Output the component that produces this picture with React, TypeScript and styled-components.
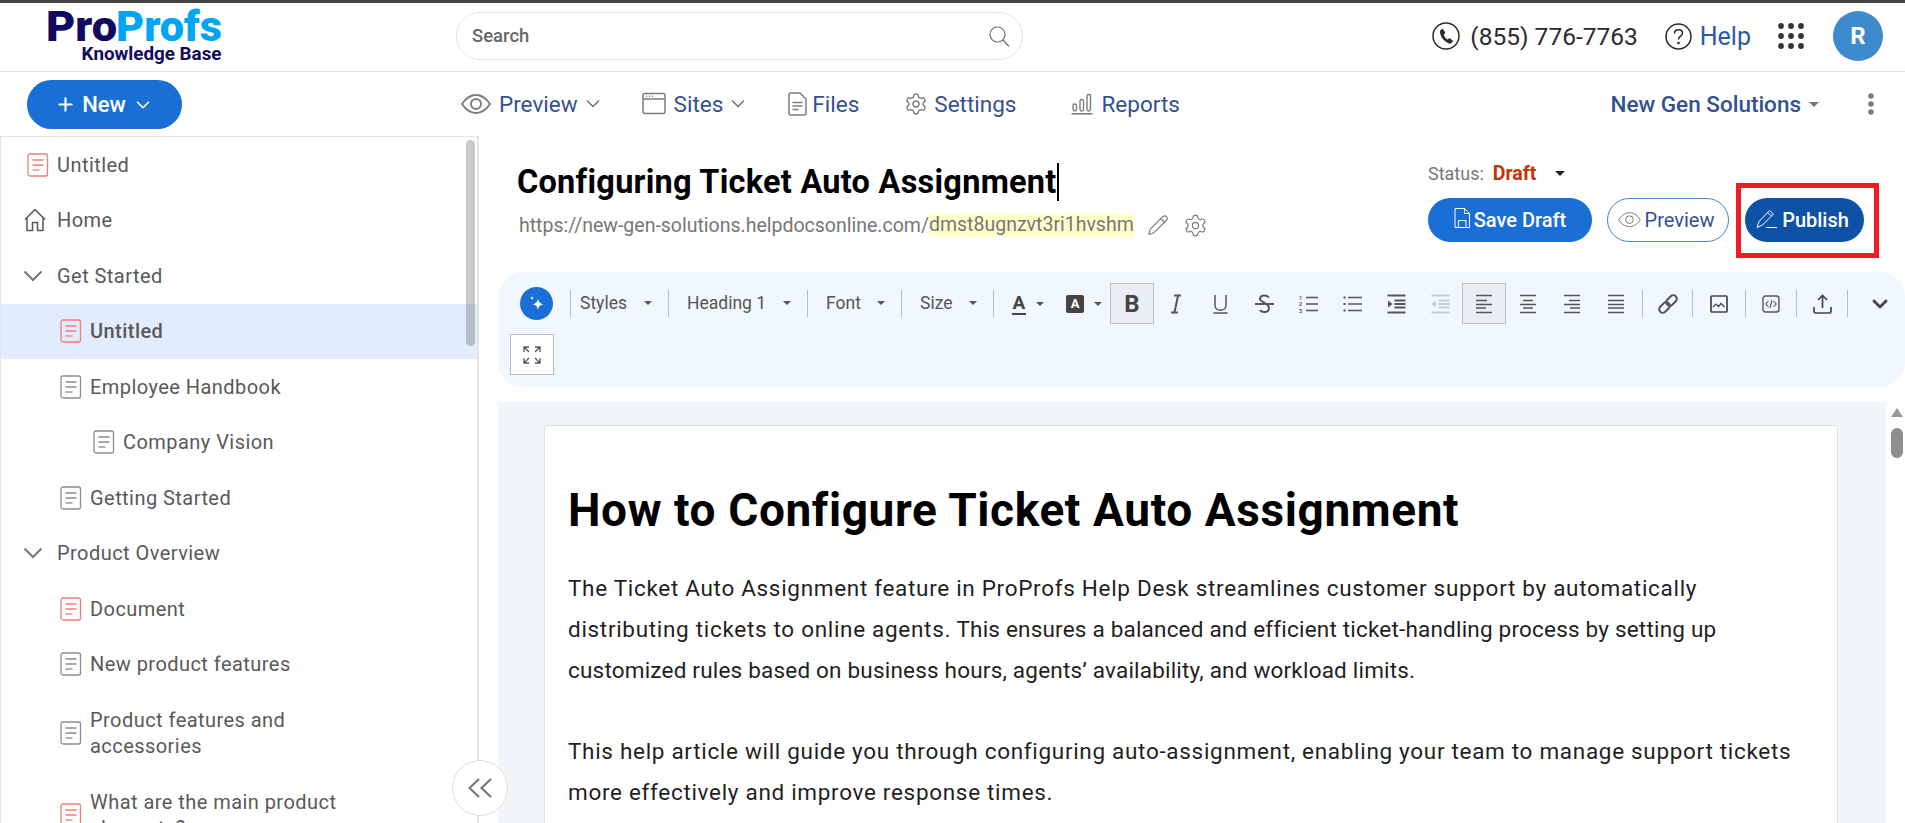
import React from "react";
import styled, { createGlobalStyle } from "styled-components";
import { Settings, ChevronDown, Pencil, Plus } from "lucide-react";

const Global = createGlobalStyle`
  html, body { margin: 0; padding: 0; height: 100%; overflow: hidden; background: #fff; }
  body { font-family: Roboto, "Liberation Sans", sans-serif; }
  * { box-sizing: border-box; }
  svg { display: block; flex: none; }
`;

const Page = styled.div`
  width: 1905px; height: 823px; display: flex; flex-direction: column; overflow: hidden; border-top: 3px solid #444;
`;

/* ---------- top header ---------- */
const Header = styled.header`
  height: 69px; flex: none; display: flex; align-items: center; border-bottom: 1px solid #e4e4e4; padding: 0 22px 2px 0;
`;
const LogoBox = styled.div`
  width: 456px; padding-left: 47px; height: 100%;
`;
const Logo = styled.svg`
  margin-top: 2px;
`;
const Search = styled.div`
  width: 567px; height: 48px; border: 1px solid #e6e6e6; border-radius: 24px; display: flex; align-items: center; justify-content: space-between;
  padding: 0 12px 0 15px;
`;
const SearchLabel = styled.span`
  font-size: 18.5px; font-weight: 500; color: #666;
`;
const HeaderRight = styled.div`
  margin-left: auto; display: flex; align-items: center;
`;
const PhoneText = styled.span`
  font-size: 24.5px; color: #2b2b2b; margin-left: 10px; margin-right: 27px; white-space: nowrap;
`;
const HelpText = styled.span`
  font-size: 25px; color: #2d5aa3; margin-left: 8px; margin-right: 27px;
`;
const Avatar = styled.div`
  width: 50px; height: 50px; border-radius: 50%; background: #3d8bcc; color: #fff; font-size: 24px; font-weight: 700;
  display: flex; align-items: center; justify-content: center; margin-left: 29px;
`;

/* ---------- nav bar ---------- */
const NavBar = styled.nav`
  height: 64px; flex: none; display: flex; align-items: center; padding-left: 27px; padding-right: 31px;
`;
const NewButton = styled.div`
  width: 155px; height: 49px; border-radius: 25px; background: #1a6fd6; color: #fff; font-size: 22px; font-weight: 500;
  display: flex; align-items: center; justify-content: center; gap: 6px; margin-top: 1px; margin-right: 279px;
`;
const NavItem = styled.div<{ $gap?: number; $inner?: number }>`
  display: flex; align-items: center; font-size: 22.5px; color: #33528f; margin-right: ${(p) => p.$gap ?? 43}px; white-space: nowrap;
  gap: ${(p) => p.$inner ?? 8}px; padding-bottom: 1px;
`;
const OrgName = styled.div`
  margin-left: auto; display: flex; align-items: center; gap: 8px; font-size: 22.5px; font-weight: 500; color: #33528f;
`;
const Kebab = styled.div`
  margin-left: 41px;
`;

/* ---------- body layout ---------- */
const Body = styled.div`
  flex: 1; min-height: 0; display: flex; position: relative;
`;
const Sidebar = styled.aside`
  width: 479px; flex: none; border: 1px solid #e4e4e4; border-width: 1px 2px 0 1px; position: relative; overflow: hidden;
`;
const Row = styled.div<{ $active?: boolean; $indent?: number }>`
  display: flex; align-items: center; padding: 14.5px 60px 14.5px ${(p) => p.$indent ?? 26}px;
  background: ${(p) => (p.$active ? "#e1edfd" : "transparent")};
  font-size: 20px; line-height: 26.5px; letter-spacing: 0.45px; color: #595959; font-weight: ${(p) => (p.$active ? 500 : 400)};
`;
const RowIcon = styled.span`
  width: 30px; flex: none; display: flex; align-items: center;
`;
const RowLabel = styled.span`
  max-width: 285px;
`;
const Thumb = styled.div`
  position: absolute; top: 3px; right: 2px; width: 9px; height: 206px; border-radius: 5px; background: rgba(60, 60, 60, 0.27);
`;
const Collapse = styled.div`
  position: absolute; left: 452px; top: 624px; width: 56px; height: 56px; border-radius: 50%; border: 1.5px solid #ddd; background: #fff;
  display: flex; align-items: center; justify-content: center; z-index: 2;
`;

const Content = styled.main`
  flex: 1; min-width: 0; display: flex; flex-direction: column;
`;
const TitleBar = styled.div`
  height: 136px; flex: none; display: flex; justify-content: space-between; padding: 26px 41px 0 38px;
`;
const TitleCol = styled.div`
  display: flex; flex-direction: column;
`;
const Title = styled.div`
  display: flex; align-items: center; font-size: 32.5px; font-weight: 700; letter-spacing: 0.25px; color: #000; height: 40px; white-space: nowrap;
  &::after { content: ""; width: 2px; height: 38px; background: #000; }
`;
const UrlRow = styled.div`
  display: flex; align-items: center; margin-top: 11px; padding-left: 2px; height: 24px;
`;
const Url = styled.span`
  font-size: 19.5px; color: #777;
`;
const Slug = styled.span`
  font-size: 19.5px; color: #777; background: #ffffcc; line-height: 24px;
`;
const UrlIcons = styled.span`
  display: flex; align-items: center; gap: 14px; margin-left: 13px; color: #777;
`;
const ActionCol = styled.div`
  display: flex; flex-direction: column;
`;
const StatusRow = styled.div`
  display: flex; align-items: center; height: 24px; margin-top: -1px; font-size: 18px; color: #777;
`;
const DraftLabel = styled.b`
  color: #c63300; font-size: 19.5px; font-weight: 700; margin-left: 9px; margin-right: 19px;
`;
const ButtonRow = styled.div`
  display: flex; align-items: center; margin-top: 13px;
`;
const Pill = styled.div<{ $bg: string; $w: number; $gap?: number; $border?: string; $color?: string; $pr?: number }>`
  width: ${(p) => p.$w}px; height: 44px; border-radius: 22px; background: ${(p) => p.$bg}; color: ${(p) => p.$color ?? "#fff"};
  border: ${(p) => (p.$border ? `1px solid ${p.$border}` : "none")}; font-size: 20px; font-weight: ${(p) => (p.$border ? 400 : 500)}; position: relative;
  display: flex; align-items: center; justify-content: center; gap: 4px; margin-right: ${(p) => p.$gap ?? 0}px; padding-right: ${(p) => p.$pr ?? 0}px;
`;
const RedBox = styled.div`
  position: absolute; left: -9px; right: -15px; top: -15px; bottom: -16px; border: 5px solid #ee1c25;
`;

/* ---------- toolbar ---------- */
const Toolbar = styled.div`
  margin-left: 19px; flex: none; height: 115px; background: #f0f7ff; border-radius: 25px; padding: 11px 0 0 12px;
  display: flex; flex-direction: column; gap: 10px;
`;
const ToolRow = styled.div`
  display: flex; align-items: center; height: 41px;
`;
const AiBall = styled.div`
  width: 33px; height: 33px; flex: none; border-radius: 50%; background: #1a6fd6; margin: 0 17px 0 10px; display: flex; align-items: center; justify-content: center;
`;
const Sep = styled.div<{ $gap?: number }>`
  width: 1px; height: 27px; background: #bcbcbc; flex: none; margin-left: ${(p) => p.$gap ?? 0}px;
`;
const Drop = styled.div<{ $w: number; $pad?: number }>`
  width: ${(p) => p.$w}px; flex: none; display: flex; align-items: center; justify-content: space-between; padding: 0 16px 2px ${(p) => p.$pad ?? 18}px;
  font-size: 17.5px; color: #555; white-space: nowrap;
`;
const Caret = styled.span<{ $c?: string; $s?: number }>`
  width: 0; height: 0; flex: none; border-left: ${(p) => p.$s ?? 4}px solid transparent; border-right: ${(p) => p.$s ?? 4}px solid transparent;
  border-top: ${(p) => p.$s ?? 4}px solid ${(p) => p.$c ?? "#555"};
`;
const ToolBtn = styled.div<{ $w?: number; $on?: boolean }>`
  width: ${(p) => p.$w ?? 44}px; height: 41px; flex: none; display: flex; align-items: center; justify-content: center;
  background: ${(p) => (p.$on ? "#e9eef5" : "transparent")}; border: 1px solid ${(p) => (p.$on ? "#bdbdbd" : "transparent")};
  color: #444;
`;
const ColorCell = styled.div<{ $w: number; $pad: number }>`
  width: ${(p) => p.$w}px; flex: none; display: flex; align-items: center; padding-left: ${(p) => p.$pad}px; gap: 10px;
`;
const GlyphA = styled.span`
  font-size: 19px; font-weight: 700; color: #444; line-height: 20px; border-bottom: 2px solid #444; width: 14px; text-align: center; display: block;
`;
const GlyphBoxA = styled.span`
  width: 18px; height: 18px; border-radius: 2px; background: #444; color: #fff; font-size: 13px; font-weight: 700; display: flex; align-items: center; justify-content: center;
`;
const GlyphB = styled.span`
  font-size: 24px; font-weight: 700; color: #444;
`;
const ExpandBtn = styled.div`
  width: 44px; height: 41px; background: #fff; border: 1px solid #bdbdbd; display: flex; align-items: center; justify-content: center;
`;

/* ---------- editor ---------- */
const Editor = styled.div`
  margin-left: 19px; margin-top: 15px; flex: 1; min-height: 0; display: flex;
`;
const Canvas = styled.div`
  flex: 1; background: #f3f6f9; padding: 23px 48px 0 46px; overflow: hidden;
`;
const Sheet = styled.article`
  background: #fff; border: 1px solid #e0e0e0; border-bottom: none; border-radius: 3px 3px 0 0; padding: 0 23px; height: 600px;
`;
const H1 = styled.h1`
  margin: 54px 0 0; font-size: 46px; line-height: 60px; letter-spacing: 0.6px; font-weight: 700; color: #000;
`;
const Para = styled.p`
  margin: 0 0 40px; max-width: 1224px; font-size: 22.5px; line-height: 41px; letter-spacing: 0.2px; color: #1f1f1f;
`;
const Lead = styled(Para)`
  margin-top: 28px;
`;
const Wide = styled.span`
  letter-spacing: 0.69px;
`;
const ScrollCol = styled.div`
  width: 19px; flex: none; background: #fff; display: flex; flex-direction: column; align-items: center; padding-top: 6px; padding-left: 3px;
`;
const ScrollUp = styled.span`
  width: 0; height: 0; border-left: 6px solid transparent; border-right: 6px solid transparent; border-bottom: 9px solid #999;
`;
const ScrollThumb = styled.div`
  width: 12px; height: 30px; border-radius: 6px; background: #8e8e8e; margin-top: 11px;
`;

/* ---------- drawings ---------- */
const Doc = ({ red }: { red?: boolean }) => {
  const c = red ? "#f27c7c" : "#8c8c8c";
  return (
    <svg width="22" height="24" viewBox="0 0 22 24" fill="none" stroke={c} strokeWidth="1.3">
      <rect x="1" y="1" width="19.5" height="22" rx="2" />
      <path d="M5.5 7h11M5.5 12h11" />
      <path d="M5.5 17h7" />
    </svg>
  );
};
const Home = () => (
  <svg width="22" height="24" viewBox="0 0 22 24" fill="none" stroke="#555" strokeWidth="1.5" strokeLinejoin="round" style={{ marginLeft: -3 }}>
    <path d="M1 11.5 11 1.5l10 10" />
    <path d="M3 9.5V22.5h5.5V14.5h5V22.5H19V9.5" />
  </svg>
);
const Chev = () => (
  <svg width="20" height="12" viewBox="0 0 20 12" fill="none" stroke="#777" strokeWidth="2" style={{ marginLeft: -4 }}>
    <path d="M1.5 1.5 10 10l8.5-8.5" />
  </svg>
);
const Eye = ({ c = "#7d7d7d", w = 30, sw = 2 }: { c?: string; w?: number; sw?: number }) => (
  <svg width={w} height={(w * 20) / 30} viewBox="0 0 30 20" fill="none" stroke={c} strokeWidth={sw}>
    <path d="M1 10C6 2.5 10.500 1 15 1s9 1.500 14 9c-5 7.500-9.500 9-14 9s-9-1.500-14-9Z" />
    <circle cx="15" cy="10" r="5" />
  </svg>
);
const SmallChev = () => (
  <svg width="14" height="9" viewBox="0 0 14 9" fill="none" stroke="#6d6d6d" strokeWidth="1.400">
    <path d="M1 1.500 7 7.500l6-6" />
  </svg>
);
const SitesIcon = () => (
  <svg width="24" height="23" viewBox="0 0 24 23" fill="none" stroke="#7d7d7d" strokeWidth="1.500">
    <rect x="1" y="1.500" width="22" height="20" rx="2" />
    <path d="M1 7h22M4 4.300h1M7 4.300h1M10 4.300h1" />
  </svg>
);
const FilesIcon = () => (
  <svg width="19" height="24" viewBox="0 0 19 24" fill="none" stroke="#7d7d7d" strokeWidth="1.500" strokeLinejoin="round">
    <path d="M2.500 1h9.500l6 6v14.500a1.500 1.500 0 0 1-1.500 1.500h-14A1.500 1.500 0 0 1 1 21.500v-19A1.500 1.500 0 0 1 2.500 1Z" />
    <path d="M4.500 10.500h10M4.500 14h10M4.500 17.500h6" />
  </svg>
);
const ReportsIcon = () => (
  <svg width="22" height="22" viewBox="0 0 22 22" fill="none" stroke="#7d7d7d" strokeWidth="1.400">
    <rect x="2" y="11" width="3.500" height="7" rx="1.700" />
    <rect x="9" y="6.500" width="3.500" height="11.500" rx="1.700" />
    <rect x="16" y="1.500" width="3.500" height="16.500" rx="1.700" />
    <path d="M0.500 20.800h21" strokeWidth="1.600" />
  </svg>
);
const SearchIcon = () => (
  <svg width="21" height="21" viewBox="0 0 21 21" fill="none" stroke="#6e6e6e" strokeWidth="1.200">
    <circle cx="8.500" cy="8.500" r="7.500" />
    <path d="M14 14l6 6.500" />
  </svg>
);
const PhoneCircle = () => (
  <svg width="28" height="28" viewBox="0 0 28 28">
    <circle cx="14" cy="14" r="13" fill="none" stroke="#2b2b2b" strokeWidth="1.500" />
    <path fill="#2b2b2b" d="M10.600 6.500 8 8.700c-.6 5.500 5 12.500 10.700 13l2.500-2.600-3.700-3-1.800 1.400c-1.900-.8-3.500-3-4-5l1.800-1.500Z" />
  </svg>
);
const HelpCircle = () => (
  <svg width="27" height="27" viewBox="0 0 27 27" fill="none" stroke="#2b2b2b" strokeWidth="1.500">
    <circle cx="13.500" cy="13.500" r="12.500" />
    <path d="M9.500 10.500c0-2.400 1.800-3.700 4-3.700s4 1.400 4 3.400c0 3-4 3-4 6.200" />
    <circle cx="13.500" cy="20" r=".6" fill="#2b2b2b" />
  </svg>
);
const Grid9 = () => (
  <svg width="26" height="26" viewBox="0 0 26 26" fill="#333">
    {[3, 13, 23].map((y) => [3, 13, 23].map((x) => <circle key={`${x}-${y}`} cx={x} cy={y} r="2.900" />))}
  </svg>
);
const KebabIcon = () => (
  <svg width="6" height="22" viewBox="0 0 6 22" fill="#7d7d7d">
    <circle cx="3" cy="3" r="2.800" />
    <circle cx="3" cy="11" r="2.800" />
    <circle cx="3" cy="19" r="2.800" />
  </svg>
);
const SaveIcon = () => (
  <svg width="16" height="20" viewBox="0 0 16 20" fill="none" stroke="#fff" strokeWidth="1" style={{ marginTop: -5 }}>
    <path d="M1 .500h9.500l5 5v14H1Z" />
    <path d="M10.500 .500v5h5M4.500 19.500v-7h7.500v7" />
  </svg>
);
const PublishIcon = () => (
  <svg width="22" height="20" viewBox="0 0 22 20" fill="none" stroke="#fff" strokeWidth="1" style={{ marginTop: -3 }}>
    <path d="M1 18.500 3 12.500 13.500 1.500l4 3.500L6.500 16Z" />
    <path d="M11.500 3.500l4 3.500M10 18.500h11" />
  </svg>
);
const Spark = () => (
  <svg width="18" height="18" viewBox="0 0 18 18" fill="#fff">
    <path d="M10 3.500c.6 3.500 2 5 5.500 5.700-3.500.7-4.900 2.200-5.500 5.800-.6-3.600-2-5.100-5.500-5.800 3.500-.7 4.900-2.200 5.500-5.700Z" />
    <path d="M4 1c.2 1.300.8 1.900 2 2.100-1.200.3-1.800.9-2 2.100-.2-1.200-.8-1.800-2-2.100 1.200-.2 1.800-.8 2-2.100Z" />
  </svg>
);
const Draw = ({ w = 20, h = 20, sw = 1.800, c = "#555", d }: { w?: number; h?: number; sw?: number; c?: string; d: string }) => (
  <svg width={w} height={h} viewBox={`0 0 ${w} ${h}`} fill="none" stroke={c} strokeWidth={sw}>
    <path d={d} />
  </svg>
);
const OlIcon = () => (
  <svg width="19" height="18" viewBox="0 0 19 18" fill="none" stroke="#555" strokeWidth="1.300">
    <path d="M7 2.500h12M7 9h12M7 15.500h12" />
    <text x="0" y="5" fontSize="5.500" fill="#555" stroke="none" fontWeight="700" fontFamily="Roboto">1</text>
    <text x="0" y="11" fontSize="5.500" fill="#555" stroke="none" fontWeight="700" fontFamily="Roboto">2</text>
    <text x="0" y="17.500" fontSize="5.500" fill="#555" stroke="none" fontWeight="700" fontFamily="Roboto">3</text>
  </svg>
);
const UlIcon = () => (
  <svg width="19" height="18" viewBox="0 0 19 18" fill="none" stroke="#555" strokeWidth="1.300">
    <path d="M5 2.500h14M5 9h14M5 15.500h14" />
    <path d="M0.500 2.500h2M0.500 9h2M0.500 15.500h2" strokeWidth="2" />
  </svg>
);
const Indent = ({ out }: { out?: boolean }) => {
  const c = out ? "#c6cbd2" : "#555";
  return (
    <svg width="19" height="20" viewBox="0 0 19 20" fill="none" stroke={c} strokeWidth="1.800">
      <path d="M0.500 1.500h18M7.500 6.500h11M7.500 10h11M7.500 13.500h11M0.500 18.500h18" />
      <path d={out ? "M5 6.500v7L0.500 10Z" : "M1 6.500v7L5.500 10Z"} fill={c} stroke="none" />
    </svg>
  );
};
const Align = ({ d }: { d: string }) => <Draw w={18} h={20} sw={1.600} d={d} />;
const LinkIcon = () => (
  <svg width="20" height="24" viewBox="0 0 20 24" fill="none" stroke="#555" strokeWidth="2">
    <g transform="rotate(45 10 12)">
      <rect x="6.500" y="1" width="7" height="12" rx="3.500" />
      <rect x="6.500" y="11" width="7" height="12" rx="3.500" />
    </g>
  </svg>
);
const ImageIcon = () => (
  <svg width="18" height="18" viewBox="0 0 18 18" fill="none" stroke="#444" strokeWidth="1.700">
    <rect x="1" y="1" width="16" height="16" rx="1" />
    <path d="M3 12l3-3 2.500 2.500 2.500-3 3.500 3.500" strokeWidth="1.200" />
  </svg>
);
const CodeIcon = () => (
  <svg width="18" height="18" viewBox="0 0 18 18" fill="none" stroke="#555" strokeWidth="1.100">
    <rect x="1" y="1" width="16" height="16" rx="2.500" strokeWidth="1.400" />
    <path d="M6.500 6 3.800 9l2.700 3M11.500 6l2.700 3-2.700 3M10 5 8 13" />
  </svg>
);
const UploadIcon = () => (
  <svg width="19" height="20" viewBox="0 0 19 20" fill="none" stroke="#444" strokeWidth="1.700">
    <path d="M9.500 14V2M5 6l4.500-4.500L14 6" />
    <path d="M1 13v4.500a1.500 1.500 0 0 0 1.500 1.500h14a1.500 1.500 0 0 0 1.500-1.500V13" />
  </svg>
);
const ExpandIcon = () => (
  <svg width="18" height="18" viewBox="0 0 18 18" fill="none" stroke="#555" strokeWidth="1.300">
    <path d="M1 6V1h5M1 1l5 5M12 1h5v5M17 1l-5 5M1 12v5h5M1 17l5-5M17 12v5h-5M17 17l-5-5" />
  </svg>
);
const DoubleLeft = () => (
  <svg width="24" height="20" viewBox="0 0 24 20" fill="none" stroke="#777" strokeWidth="2.200">
    <path d="M11 1 1.500 10l9.500 9M23 1l-9.500 9 9.500 9" />
  </svg>
);

type Item = { label: string; icon?: "red" | "grey" | "home" | "chev"; indent?: number; active?: boolean };
const tree: Item[] = [
  { label: "Untitled", icon: "red" },
  { label: "Home", icon: "home" },
  { label: "Get Started", icon: "chev" },
  { label: "Untitled", icon: "red", indent: 59, active: true },
  { label: "Employee Handbook", icon: "grey", indent: 59 },
  { label: "Company Vision", icon: "grey", indent: 92 },
  { label: "Getting Started", icon: "grey", indent: 59 },
  { label: "Product Overview", icon: "chev" },
  { label: "Document", icon: "red", indent: 59 },
  { label: "New product features", icon: "grey", indent: 59 },
  { label: "Product features and accessories", icon: "grey", indent: 59 },
  { label: "What are the main product elements?", icon: "red", indent: 59 },
];

const renderIcon = (k: Item["icon"]) => {
  if (k === "red") return <Doc red />;
  if (k === "grey") return <Doc />;
  if (k === "home") return <Home />;
  return <Chev />;
};

export default function App() {
  return (
    <Page>
      <Global />
      <Header>
        <LogoBox>
          <Logo width="180" height="60" viewBox="0 0 180 60" fontFamily="Roboto, sans-serif">
            <text x="-1" y="35.700" fontSize="43" fontWeight="900" fill="#110a5f" textLength="71" lengthAdjust="spacingAndGlyphs">Pro</text>
            <text x="69" y="35.700" fontSize="43" fontWeight="900" fill="#00a5f6" textLength="106" lengthAdjust="spacingAndGlyphs">Profs</text>
            <text x="34.500" y="54.500" fontSize="18.500" fontWeight="700" fill="#110a5f" textLength="140" lengthAdjust="spacingAndGlyphs">Knowledge Base</text>
          </Logo>
        </LogoBox>
        <Search>
          <SearchLabel>Search</SearchLabel>
          <SearchIcon />
        </Search>
        <HeaderRight>
          <PhoneCircle />
          <PhoneText>(855) 776-7763</PhoneText>
          <HelpCircle />
          <HelpText>Help</HelpText>
          <Grid9 />
          <Avatar>R</Avatar>
        </HeaderRight>
      </Header>

      <NavBar>
        <NewButton>
          <Plus size={21} strokeWidth={2.4} />
          <span>New</span>
          <ChevronDown size={22} strokeWidth={1.8} />
        </NewButton>
        <NavItem $gap={42}>
          <Eye />
          Preview
          <SmallChev />
        </NavItem>
        <NavItem>
          <SitesIcon />
          Sites
          <SmallChev />
        </NavItem>
        <NavItem $gap={45} $inner={5}>
          <FilesIcon />
          Files
        </NavItem>
        <NavItem $gap={55} $inner={6}>
          <Settings size={24} strokeWidth={1.4} color="#7d7d7d" />
          Settings
        </NavItem>
        <NavItem>
          <ReportsIcon />
          Reports
        </NavItem>
        <OrgName>
          New Gen Solutions
          <Caret $c="#777" $s={5} />
          <Kebab>
            <KebabIcon />
          </Kebab>
        </OrgName>
      </NavBar>

      <Body>
        <Sidebar>
          {tree.map((t, i) => (
            <Row key={i} $active={t.active} $indent={t.indent}>
              <RowIcon>{renderIcon(t.icon)}</RowIcon>
              <RowLabel>{t.label}</RowLabel>
            </Row>
          ))}
          <Thumb />
        </Sidebar>
        <Collapse>
          <DoubleLeft />
        </Collapse>

        <Content>
          <TitleBar>
            <TitleCol>
              <Title>Configuring Ticket Auto Assignment</Title>
              <UrlRow>
                <Url>https://new-gen-solutions.helpdocsonline.com/</Url>
                <Slug>dmst8ugnzvt3ri1hvshm</Slug>
                <UrlIcons>
                  <Pencil size={22} strokeWidth={1.2} />
                  <Settings size={25} strokeWidth={1.1} />
                </UrlIcons>
              </UrlRow>
            </TitleCol>
            <ActionCol>
              <StatusRow>
                Status:
                <DraftLabel>Draft</DraftLabel>
                <Caret $c="#222" $s={5} />
              </StatusRow>
              <ButtonRow>
                <Pill $bg="#1a6fd6" $w={164} $gap={15}>
                  <SaveIcon />
                  Save Draft
                </Pill>
                <Pill $bg="#fff" $w={122} $gap={16} $border="#3d8bcc" $color="#33528f" $pr={4}>
                  <Eye c="#777" w={23} sw={1.300} />
                  Preview
                </Pill>
                <Pill $bg="#0d52a6" $w={119} $pr={4}>
                  <PublishIcon />
                  Publish
                  <RedBox />
                </Pill>
              </ButtonRow>
            </ActionCol>
          </TitleBar>

          <Toolbar>
            <ToolRow>
              <AiBall>
                <Spark />
              </AiBall>
              <Sep />
              <Drop $w={97} $pad={9}>
                Styles
                <Caret />
              </Drop>
              <Sep />
              <Drop $w={138}>
                Heading 1
                <Caret />
              </Drop>
              <Sep />
              <Drop $w={93}>
                Font
                <Caret />
              </Drop>
              <Sep />
              <Drop $w={91}>
                Size
                <Caret />
              </Drop>
              <Sep />
              <ColorCell $w={62} $pad={18}>
                <GlyphA>A</GlyphA>
                <Caret />
              </ColorCell>
              <ColorCell $w={54} $pad={10}>
                <GlyphBoxA>A</GlyphBoxA>
                <Caret />
              </ColorCell>
              <ToolBtn $on>
                <GlyphB>B</GlyphB>
              </ToolBtn>
              <ToolBtn>
                <Draw w={12} h={20} sw={2} d="M4 1.500h7M1 18.500h7M8 1.500 4.500 18.500" />
              </ToolBtn>
              <ToolBtn>
                <Draw w={15} h={20} sw={1.500} d="M2 1v10c0 7 11 7 11 0V1M0.500 19h14" />
              </ToolBtn>
              <ToolBtn>
                <Draw w={19} h={20} sw={2} d="M14 3.500C12 .5 5 .5 5 5c0 3 9 4 9 9 0 5-7 5-9 2M0 10h19" />
              </ToolBtn>
              <ToolBtn>
                <OlIcon />
              </ToolBtn>
              <ToolBtn>
                <UlIcon />
              </ToolBtn>
              <ToolBtn>
                <Indent />
              </ToolBtn>
              <ToolBtn>
                <Indent out />
              </ToolBtn>
              <ToolBtn $on>
                <Align d="M1 1.500h16M1 6.500h11M1 10.500h16M1 14h10M1 18.500h16" />
              </ToolBtn>
              <ToolBtn>
                <Align d="M1 1.500h16M4 6.500h10M1 10.500h16M4 14h10M1 18.500h16" />
              </ToolBtn>
              <ToolBtn>
                <Align d="M1 1.500h16M6 6.500h11M1 10.500h16M7 14h10M1 18.500h16" />
              </ToolBtn>
              <ToolBtn>
                <Align d="M1 1.500h16M1 6.500h16M1 10.500h16M1 14h16M1 18.500h16" />
              </ToolBtn>
              <Sep $gap={4} />
              <ToolBtn $w={49}>
                <LinkIcon />
              </ToolBtn>
              <Sep />
              <ToolBtn $w={52}>
                <ImageIcon />
              </ToolBtn>
              <Sep />
              <ToolBtn $w={50}>
                <CodeIcon />
              </ToolBtn>
              <Sep />
              <ToolBtn $w={50}>
                <UploadIcon />
              </ToolBtn>
              <Sep />
              <ToolBtn $w={64}>
                <ChevronDown size={24} strokeWidth={2.8} />
              </ToolBtn>
            </ToolRow>
            <ToolRow>
              <ExpandBtn>
                <ExpandIcon />
              </ExpandBtn>
            </ToolRow>
          </Toolbar>

          <Editor>
            <Canvas>
              <Sheet>
                <H1>How to Configure Ticket Auto Assignment</H1>
                <Lead>
                  <Wide>
                    The Ticket Auto Assignment feature in ProProfs Help Desk streamlines customer support by automatically
                    distributing tickets to online agents.
                  </Wide>{" "}
                  This ensures a balanced and efficient ticket-handling process by setting up customized rules based on
                  business hours, agents’ availability, and workload limits.
                </Lead>
                <Para>
                  <Wide>
                    This help article will guide you through configuring auto-assignment, enabling your team to manage
                    support tickets more effectively and improve response times.
                  </Wide>
                </Para>
              </Sheet>
            </Canvas>
            <ScrollCol>
              <ScrollUp />
              <ScrollThumb />
            </ScrollCol>
          </Editor>
        </Content>
      </Body>
    </Page>
  );
}
